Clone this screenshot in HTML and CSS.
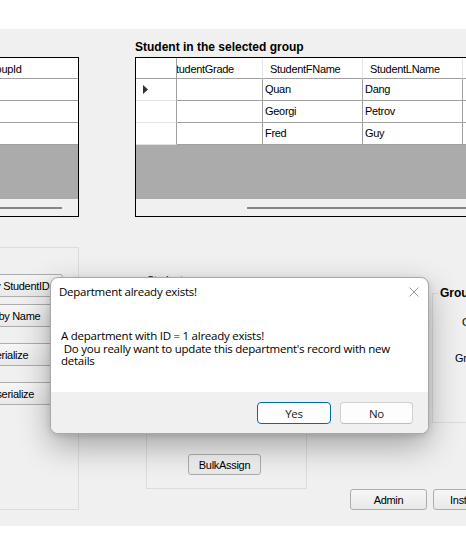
FILE: index.html
```html
<!DOCTYPE html>
<html>
<head>
<meta charset="utf-8">
<link rel="stylesheet" href="styles.css">
</head>
<body>
<div class="page">
  <div class="form">
    <div class="top">
      <div class="grid grid-left">
        <div class="lrow head">GroupId</div>
        <div class="lrow"></div>
        <div class="lrow"></div>
        <div class="lrow"></div>
        <div class="grid-empty"></div>
        <div class="hscroll"><div class="thumb thumb-left"></div></div>
      </div>
      <div class="right-panel">
        <div class="title">Student in the selected group</div>
        <div class="grid grid-right">
          <div class="rrow head">
            <div class="rh"></div>
            <div class="clip">
              <div class="cells">
                <div class="c first">StudentGrade</div>
                <div class="c">StudentFName</div>
                <div class="c">StudentLName</div>
                <div class="c"></div>
              </div>
            </div>
          </div>
          <div class="rrow">
            <div class="rh"><svg class="arrow" width="5" height="9" viewBox="0 0 5 9"><polygon points="0,0 5,4.5 0,9" fill="#333"/></svg></div>
            <div class="clip">
              <div class="cells">
                <div class="c"></div>
                <div class="c">Quan</div>
                <div class="c">Dang</div>
                <div class="c"></div>
              </div>
            </div>
          </div>
          <div class="rrow">
            <div class="rh"></div>
            <div class="clip">
              <div class="cells">
                <div class="c"></div>
                <div class="c">Georgi</div>
                <div class="c">Petrov</div>
                <div class="c"></div>
              </div>
            </div>
          </div>
          <div class="rrow">
            <div class="rh"></div>
            <div class="clip">
              <div class="cells">
                <div class="c"></div>
                <div class="c">Fred</div>
                <div class="c">Guy</div>
                <div class="c"></div>
              </div>
            </div>
          </div>
          <div class="grid-empty"></div>
          <div class="hscroll"><div class="thumb thumb-right"></div></div>
        </div>
      </div>
    </div>

    <div class="lower">
      <div class="gb gb-left">
        <button class="wbtn side-btn b1">Sort by StudentID</button>
        <button class="wbtn side-btn b2">Sort by Name</button>
        <button class="wbtn side-btn b3">Serialize</button>
        <button class="wbtn side-btn b4">Deserialize</button>
      </div>
      <fieldset class="gb gb-mid">
        <legend>Student</legend>
        <button class="wbtn bulk-btn">BulkAssign</button>
      </fieldset>
      <div class="right-col">
        <fieldset class="gb gb-right">
          <legend>Group details</legend>
          <span class="glabel g1">Group ID</span>
          <span class="glabel g2">Group Name</span>
        </fieldset>
        <div class="btn-row">
          <button class="wbtn wide-btn">Admin</button>
          <button class="wbtn wide-btn">Instructor</button>
        </div>
      </div>
    </div>
  </div>

  <div class="dialog">
    <div class="dlg-body">
      <div class="dlg-head">
        <span class="dlg-title">Department already exists!</span>
        <svg class="dlg-close" width="10" height="10" viewBox="0 0 10 10"><path d="M0.5 0.5 L9.5 9.5 M9.5 0.5 L0.5 9.5" stroke="#9a9a9a" stroke-width="1" fill="none"/></svg>
      </div>
      <div class="dlg-msg">
        <span class="line">A department with ID = 1 already exists!</span>
        <span class="line"> Do you really want to update this department's record with new</span>
        <span class="line">details</span>
      </div>
    </div>
    <div class="dlg-foot">
      <button class="dbtn primary yes">Yes</button>
      <button class="dbtn no">No</button>
    </div>
  </div>
</div>
</body>
</html>
```

FILE: styles.css
```css
* { box-sizing: border-box; }
html, body { margin: 0; padding: 0; }
body {
  width: 466px;
  height: 548px;
  overflow: hidden;
  background: #fff;
  font-family: "Liberation Sans", Arial, sans-serif;
}
.page {
  position: relative;
  width: 466px;
  height: 548px;
  overflow: hidden;
}
.form {
  margin-top: 29px;
  height: 497px;
  background: #f0f0f0;
  overflow: hidden;
  font-size: 11px;
  letter-spacing: -0.3px;
  color: #000;
}

/* top area with grids */
.top {
  display: flex;
  align-items: flex-start;
  height: 188px;
}
.grid {
  flex-shrink: 0;
  height: 160px;
  border: 1px solid #000;
  background: #ababab;
  display: flex;
  flex-direction: column;
}
.grid-left {
  width: 179px;
  margin-left: -100px;
  margin-top: 28px;
}
.lrow {
  height: 22px;
  flex-shrink: 0;
  background: #fff;
  border-bottom: 1px solid #a0a0a0;
  white-space: nowrap;
}
.lrow.head {
  height: 21px;
  padding: 2px 0 0 83px;
  line-height: 18px;
}
.grid-empty { flex: 1; }
.hscroll {
  height: 17px;
  flex-shrink: 0;
  background: #f0f0f0;
  padding-top: 8px;
}
.thumb {
  height: 2px;
  background: #868686;
}
.thumb-left { width: 161px; }
.thumb-right { margin-left: 111px; }

.right-panel {
  flex-shrink: 0;
  margin-left: 56px;
  padding-top: 11px;
}
.title {
  font-size: 12px;
  font-weight: bold;
  line-height: 14px;
  letter-spacing: 0;
  margin-bottom: 3px;
  white-space: nowrap;
}
.grid-right { width: 370px; }
.rrow {
  display: flex;
  height: 22px;
  flex-shrink: 0;
}
.rrow.head { height: 21px; }
.rh {
  width: 41px;
  flex-shrink: 0;
  background: #fff;
  border-right: 1px solid #a0a0a0;
  border-bottom: 1px solid #e3e3e3;
  display: flex;
  align-items: center;
  padding-left: 7px;
}
.rrow.head .rh { border-bottom-color: #a0a0a0; }
.arrow { display: block; }
.clip {
  flex: 1;
  overflow: hidden;
  display: flex;
}
.cells {
  display: flex;
  margin-left: -14px;
}
.c {
  width: 100px;
  flex-shrink: 0;
  background: #fff;
  border-right: 1px solid #a0a0a0;
  border-bottom: 1px solid #a0a0a0;
  padding-left: 2px;
  line-height: 21px;
  white-space: nowrap;
  overflow: hidden;
}
.rrow.head .c {
  border-right-color: #e5e5e5;
  padding: 2px 0 0 7px;
  line-height: 18px;
}
.rrow.head .c.first { padding-left: 6px; }

/* lower area */
.lower {
  display: flex;
  align-items: flex-start;
}
.gb {
  flex-shrink: 0;
  margin: 0;
  padding: 0;
  min-width: 0;
  border: 1px solid #dcdcdc;
}
.gb-left {
  width: 179px;
  height: 263px;
  margin-left: -100px;
  margin-top: 30px;
  display: flex;
  flex-direction: column;
  align-items: flex-start;
}
.wbtn {
  font: inherit;
  letter-spacing: inherit;
  color: #000;
  border: 1px solid #adadad;
  border-radius: 3px;
  background: linear-gradient(#f6f6f6, #e9e9e9);
  padding: 0;
  white-space: nowrap;
  flex-shrink: 0;
}
.side-btn {
  width: 109px;
  height: 23px;
  margin-left: 53px;
}
.b1 { margin-top: 26px; }
.b2 { margin-top: 7px; }
.b3 { margin-top: 16px; }
.b4 { margin-top: 16px; }

.gb-mid {
  width: 161px;
  height: 215px;
  margin-left: 67px;
  margin-top: 57px;
  display: flex;
  flex-direction: column;
  align-items: flex-start;
}
.gb-mid legend {
  padding: 0;
  margin-left: 0;
  line-height: 13px;
}
.bulk-btn {
  width: 73px;
  height: 21px;
  margin-top: auto;
  margin-left: 41px;
  margin-bottom: 13px;
}

.right-col {
  flex-shrink: 0;
  width: 200px;
  margin-left: 43px;
  display: flex;
  flex-direction: column;
  align-items: flex-start;
}
.gb-right {
  width: 150px;
  height: 137px;
  margin-left: 82px;
  margin-top: 69px;
  display: flex;
  flex-direction: column;
  align-items: flex-start;
}
.gb-right legend {
  padding: 0 2px;
  margin-left: 5px;
  font-size: 12px;
  font-weight: bold;
  line-height: 14px;
  letter-spacing: 0;
  white-space: nowrap;
}
.glabel {
  display: block;
  line-height: 13px;
  white-space: nowrap;
}
.g1 { margin-top: 16px; margin-left: 29px; }
.g2 { margin-top: 23px; margin-left: 22px; }
.btn-row {
  display: flex;
  gap: 6px;
  margin-top: 66px;
}
.wide-btn {
  width: 77px;
  height: 21px;
}

/* message box */
.dialog {
  position: absolute;
  left: 50px;
  top: 277px;
  width: 379px;
  height: 157px;
  background: #fff;
  border: 1px solid #a8a8a8;
  border-radius: 8px;
  overflow: hidden;
  display: flex;
  flex-direction: column;
  box-shadow: 0 12px 32px rgba(0, 0, 0, 0.32), 0 2px 6px rgba(0, 0, 0, 0.12);
  font-family: "Open Sans", "Noto Sans", sans-serif;
  font-size: 11.5px;
  letter-spacing: -0.25px;
  color: #000;
}
.dlg-body {
  height: 114px;
  flex-shrink: 0;
  padding: 6px 9px 0 8px;
}
.dlg-head {
  display: flex;
  justify-content: space-between;
  align-items: center;
  line-height: 15px;
}
.dlg-close { display: block; }
.dlg-msg {
  margin-top: 31px;
  padding-left: 2px;
  line-height: 12.5px;
}
.dlg-msg .line {
  display: block;
  white-space: pre;
}
.dlg-foot {
  flex: 1;
  background: #f0f0f0;
  display: flex;
  justify-content: flex-end;
  gap: 9px;
  padding: 10px 15px 0 0;
}
.dbtn {
  font: inherit;
  letter-spacing: inherit;
  color: #1b1b1b;
  height: 22px;
  padding: 0;
  border: 1px solid #d0d0d0;
  border-bottom-color: #bcbcbc;
  border-radius: 4px;
  background: #fdfdfd;
}
.dbtn.yes { width: 74px; border-color: #0067c0; }
.dbtn.no { width: 73px; }
```
